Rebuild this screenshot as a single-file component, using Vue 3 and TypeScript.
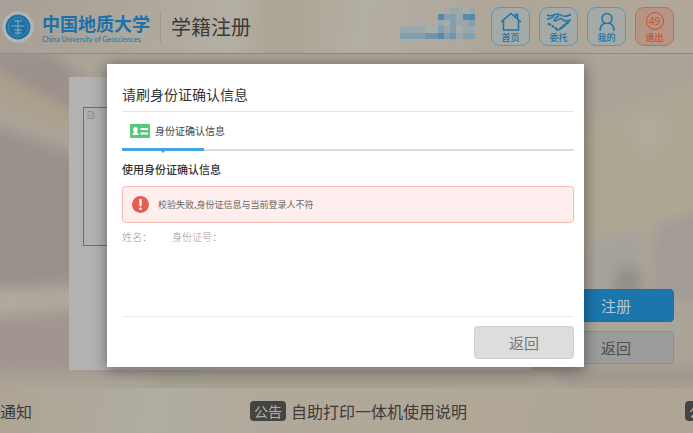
<script setup lang="ts">
interface Notice {
  id: number
  tag: string
  text: string
}

const title = '学籍注册'

const notices: Notice[] = [
  { id: 1, tag: '', text: '通知' },
  { id: 2, tag: '公告', text: '自助打印一体机使用说明' },
  { id: 3, tag: '公告', text: '' },
]

// Shade of each tile of the masked user name; 0 is an empty tile.
const mask: number[][] = [
  [0, 0, 0, 0, 0, 0, 1, 0, 2, 2, 1, 2],
  [0, 0, 0, 0, 0, 0, 5, 3, 3, 2, 5, 5],
  [0, 0, 0, 0, 0, 0, 2, 1, 3, 2, 2, 3],
  [2, 2, 2, 2, 1, 1, 3, 2, 3, 1, 2, 2],
  [3, 3, 3, 3, 4, 4, 5, 3, 4, 2, 3, 3],
  [1, 1, 0, 0, 0, 0, 1, 0, 0, 1, 0, 0],
]
const tiles: number[] = mask.flat()
</script>

<template>
  <div class="page">
    <svg class="backdrop" viewBox="0 0 693 433" preserveAspectRatio="none" aria-hidden="true">
      <defs>
        <filter id="soft" x="-20%" y="-20%" width="140%" height="140%"><feGaussianBlur stdDeviation="7" /></filter>
      </defs>
      <rect width="693" height="433" fill="#aba498" />
      <g filter="url(#soft)">
        <path d="M-20 120 120 170V285L-20 290z" fill="#9a918c" />
        <path d="M-20 50H50L120 110V132L-20 66z" fill="#9b918b" />
        <path d="M-20 60 120 140V155L-20 95z" fill="#aca08d" />
        <path d="M-20 318 200 300V375L-20 372z" fill="#a0968f" />
        <path d="M-20 290 120 286V300L-20 316z" fill="#b1ab9c" />
        <path d="M570 130 710 80V220L570 250z" fill="#aea794" />
        <path d="M655 225 720 205V300H655z" fill="#a29b96" />
        <path d="M595 240 640 230V300H595z" fill="#a6a29c" />
        <ellipse cx="628" cy="283" rx="14" ry="18" fill="#938e87" />
        <ellipse cx="649" cy="132" rx="12" ry="18" fill="#afab9e" />
        <path d="M540 368H720V384H560z" fill="#9e948c" />
        <path d="M150 368H540V386H150z" fill="#a19b8d" />
      </g>
    </svg>

    <header class="top">
      <svg class="seal" viewBox="0 0 32 32" aria-hidden="true">
        <circle cx="16" cy="16" r="15.5" fill="#b9bbb9" />
        <circle cx="16" cy="16" r="14" fill="none" stroke="#a0aeb5" stroke-width="1.4" stroke-dasharray="1.4 1.4" />
        <circle cx="16" cy="16" r="12.4" fill="#1b70a5" />
        <circle cx="16" cy="16" r="9.600" fill="none" stroke="#5f93b1" stroke-width=".7" />
        <path d="M12 10h8M9.500 15h13M16 9v15M12 19h8M12.500 22h7" fill="none" stroke="#8eabbb" stroke-width="1.100" />
      </svg>
      <div class="brand">
        <span class="brand-cn">中国地质大学</span>
        <span class="brand-en">China University of Geosciences</span>
      </div>
      <h1 class="title">{{ title }}</h1>
      <div class="mask">
        <i v-for="(t, i) in tiles" :key="i" :class="'t' + t"></i>
      </div>
      <nav class="nav">
        <button class="nav-btn" type="button">
          <svg viewBox="0 0 26 20" aria-hidden="true"><path d="M3 10 13 1.500 23 10M5.500 8.500V18h15V8.500M17.500 5V2.500h2V7" /></svg>
          <span>首页</span>
        </button>
        <button class="nav-btn" type="button">
          <svg viewBox="0 0 26 20" aria-hidden="true">
            <path d="M1 3c3 1.500 5 1 8-.5 3-1.200 5 0 7 1.200 3 1.500 5 .8 9-1.200M1 7c3 0 5-1 7-2.500M25 8c-3 0-4 2-7 .5-2-1-3-3-5-1.500-2 2-4 2.500-5 1.500 1-2 3-4 5-5" />
            <path d="M2 11.500 5 13M6 13.500l2 2M9 15.500l3 3M13 18l3-3M15.500 16.500l3-4M18 14.500l3-4M21 12l2-3" stroke-width="2" />
          </svg>
          <span>委托</span>
        </button>
        <button class="nav-btn" type="button">
          <svg viewBox="0 0 26 20" aria-hidden="true"><circle cx="13" cy="6.500" r="5" /><path d="M6 19c0-4 2-7 5-8M15 11c3 1 5 4 5 8" /></svg>
          <span>我的</span>
        </button>
        <button class="nav-btn exit" type="button">
          <b class="count">49</b>
          <span>退出</span>
        </button>
      </nav>
    </header>

    <main class="content">
      <section class="panel">
        <div class="preview">
          <svg viewBox="0 0 8 8" aria-hidden="true"><path d="M1 .5h4l2 2v5H1zM5 .5v2h2M2 6l1.500-2L5 6l1-1" /></svg>
        </div>
      </section>
      <aside class="actions">
        <button class="btn primary" type="button">注册</button>
        <button class="btn plain" type="button">返回</button>
      </aside>
    </main>

    <footer class="ticker">
      <div v-for="n in notices" :key="n.id" class="notice">
        <span v-if="n.tag" class="tag">{{ n.tag }}</span>
        <span v-if="n.text">{{ n.text }}</span>
      </div>
    </footer>

    <div class="overlay">
      <section class="dialog" role="dialog" aria-labelledby="dialog-title">
        <h2 id="dialog-title" class="dialog-title">请刷身份证确认信息</h2>
        <div class="tabs">
          <button class="tab" type="button">
            <svg viewBox="0 0 20 14" aria-hidden="true">
              <rect width="20" height="14" rx="1" fill="#55cb79" />
              <path d="M2.500 11V9.500L4 8.500V8c-1-2-1-5 1.500-5S8 6 7 8v.5l1.500 1V11z" fill="#fff" />
              <path d="M10.500 5h7.500M10.500 9.500h7.500" stroke="#fff" stroke-width="1.800" />
            </svg>
            <span>身份证确认信息</span>
          </button>
        </div>
        <h3 class="subtitle">使用身份证确认信息</h3>
        <div class="alert" role="alert">
          <svg viewBox="0 0 16 16" aria-hidden="true">
            <circle cx="8" cy="8" r="8" fill="#e75c4f" />
            <path d="M7 3h2l-.3 6.500H7.300z" fill="#fff" stroke="#fff" stroke-width=".5" />
            <circle cx="8" cy="12" r="1.200" fill="#fff" />
          </svg>
          <span>校验失败,身份证信息与当前登录人不符</span>
        </div>
        <div class="fields">
          <span>姓名：</span>
          <span>身份证号：</span>
        </div>
        <div class="dialog-foot">
          <button class="btn back" type="button">返回</button>
        </div>
      </section>
    </div>
  </div>
</template>

<style>
body {
  margin: 0;
}
</style>

<style scoped>
.page {
  position: relative;
  isolation: isolate;
  display: flex;
  flex-direction: column;
  min-height: 100vh;
  overflow: hidden;
  box-sizing: border-box;
  font-family: "Noto Sans CJK SC", sans-serif;
  color: #3c3b39;
  background: #aba498;
}

.backdrop {
  position: absolute;
  inset: 0;
  z-index: -1;
  width: 100%;
  height: 100%;
}

button {
  font-family: inherit;
  margin: 0;
  cursor: pointer;
}

.top {
  display: flex;
  align-items: center;
  height: 53px;
  padding: 0 19px 0 2px;
  border-bottom: 1px solid #6897aa;
  background: linear-gradient(97deg, #a89f97 0%, #afa89c 22%, #b4afa4 34%, #aca494 40%, #b3aea3 52%, #b1aaa0 60%, #aea697 72%, #b0a898 100%);
}

.seal {
  flex: none;
  width: 32px;
  height: 32px;
}

.brand {
  display: flex;
  flex-direction: column;
  margin-left: 8px;
  padding-right: 10px;
  border-right: 1px solid #a09a90;
  color: #1b72a8;
  white-space: nowrap;
}

.brand-cn {
  font-size: 18px;
  line-height: 24px;
  font-weight: 700;
}

.brand-en {
  font-family: Lato, sans-serif;
  font-size: 7px;
  line-height: 8px;
}

.title {
  margin: 0 0 0 10px;
  font-size: 20px;
  line-height: 28px;
  font-weight: 400;
  white-space: nowrap;
}

.mask {
  display: grid;
  grid-template-columns: repeat(12, 1fr);
  grid-template-rows: repeat(6, 1fr);
  width: 75px;
  height: 37px;
  margin-left: auto;
}

.t1 { background: #aaaca6; }
.t2 { background: #9aa8ae; }
.t3 { background: #849fad; }
.t4 { background: #7095aa; }
.t5 { background: #578aa7; }

.nav {
  display: flex;
  gap: 9px;
  margin-left: 16px;
}

.nav-btn {
  display: flex;
  flex-direction: column;
  align-items: center;
  justify-content: space-between;
  box-sizing: border-box;
  width: 39px;
  height: 39px;
  padding: 4px 0 2px;
  border: 1px solid #5f97b3;
  border-radius: 9px;
  background: #a3aaa7;
  color: #2074a5;
  font-size: 9px;
  line-height: 11px;
  font-weight: 500;
}

.nav-btn svg {
  width: 26px;
  height: 20px;
  fill: none;
  stroke: currentColor;
  stroke-width: 1.5;
}

.nav-btn.exit {
  border-color: #c66c4e;
  background: #b69586;
  color: #c5532c;
}

.count {
  box-sizing: border-box;
  width: 18px;
  height: 18px;
  border: 1px solid currentColor;
  border-radius: 50%;
  font-family: "Open Sans", sans-serif;
  font-size: 10px;
  line-height: 16px;
  font-weight: 400;
  text-align: center;
}

.content {
  flex: 1;
  display: flex;
  gap: 27px;
  padding: 23px 19px 18px 69px;
}

.panel {
  flex: 1;
  padding: 30px 14px;
  background: #b2b2b2;
}

.preview {
  box-sizing: border-box;
  width: 110px;
  height: 139px;
  padding: 3px;
  border: 1px solid #6d6d6d;
}

.preview svg {
  display: block;
  width: 8px;
  height: 8px;
  fill: none;
  stroke: #858585;
  stroke-width: 0.8;
}

.actions {
  display: flex;
  flex-direction: column;
  justify-content: flex-end;
  gap: 9px;
  width: 116px;
  padding-bottom: 6px;
}

.btn {
  box-sizing: border-box;
  height: 33px;
  padding: 0;
  border: 1px solid #8e8e8e;
  border-radius: 4px;
  font-size: 15px;
  line-height: 20px;
}

.primary {
  border-color: #1971a7;
  background: #1a76ad;
  color: #b9c6cd;
}

.plain {
  background: #9b9b9b;
  color: #4c4c4c;
}

.ticker {
  display: flex;
  align-items: center;
  gap: 218px;
  height: 45px;
  overflow: hidden;
  background: linear-gradient(100deg, #aea494, #b0aca2 22%, #b0a898 45%, #aea595);
  font-size: 16px;
  line-height: 24px;
  white-space: nowrap;
}

.notice {
  display: flex;
  flex: none;
  align-items: center;
  gap: 5px;
}

.tag {
  padding: 0 4px;
  border-radius: 4px;
  background: #454443;
  color: #b5b1aa;
  font-size: 14px;
  line-height: 20px;
}

.overlay {
  position: absolute;
  inset: 0;
  display: flex;
  align-items: center;
  justify-content: center;
  padding: 0 2px 2px 0;
}

.dialog {
  box-sizing: border-box;
  width: 69%;
  padding: 17px 10px 8px 15px;
  background: #fff;
  box-shadow: 0 2px 14px rgba(0, 0, 0, 0.45);
}

.dialog-title {
  margin: 0;
  padding-bottom: 4px;
  border-bottom: 1px solid #e6e6e6;
  font-size: 14px;
  line-height: 26px;
  font-weight: 400;
  color: #333;
}

.tabs {
  display: flex;
  height: 37px;
  border-bottom: 2px solid #dcdcdc;
}

.tab {
  position: relative;
  display: flex;
  align-items: center;
  gap: 5px;
  width: 82px;
  padding: 0 0 0 8px;
  border: 0;
  background: none;
  color: #444;
  font-size: 10px;
  line-height: 16px;
  white-space: nowrap;
}

.tab svg {
  flex: none;
  width: 20px;
  height: 14px;
}

.tab::before {
  content: "";
  position: absolute;
  left: 0;
  right: 0;
  bottom: -2px;
  height: 3px;
  background: #42a5e0;
}

.tab::after {
  content: "";
  position: absolute;
  left: 50%;
  bottom: -4px;
  border: 2px solid transparent;
  border-top-color: #42a5e0;
  border-bottom-width: 0;
  transform: translateX(-50%);
}

.subtitle {
  margin: 9px 0 8px;
  font-size: 11px;
  line-height: 18px;
  font-weight: 500;
  color: #333;
}

.alert {
  display: flex;
  align-items: center;
  gap: 9px;
  box-sizing: border-box;
  height: 37px;
  padding: 0 9px;
  border: 1px solid #f6b9b3;
  border-radius: 4px;
  background: #feefee;
  color: #666;
  font-size: 9px;
  line-height: 14px;
}

.alert svg {
  width: 17px;
  height: 17px;
}

.fields {
  display: flex;
  gap: 20px;
  min-height: 86px;
  padding-top: 7px;
  font-family: "Liberation Serif", "Noto Sans CJK SC", serif;
  font-size: 10px;
  line-height: 16px;
  font-weight: 300;
  color: #999;
}

.dialog-foot {
  display: flex;
  justify-content: flex-end;
  padding-top: 9px;
  border-top: 1px solid #ececec;
}

.back {
  width: 100px;
  border-color: #cfcfcf;
  background: #ddd;
  color: #777;
}
</style>
